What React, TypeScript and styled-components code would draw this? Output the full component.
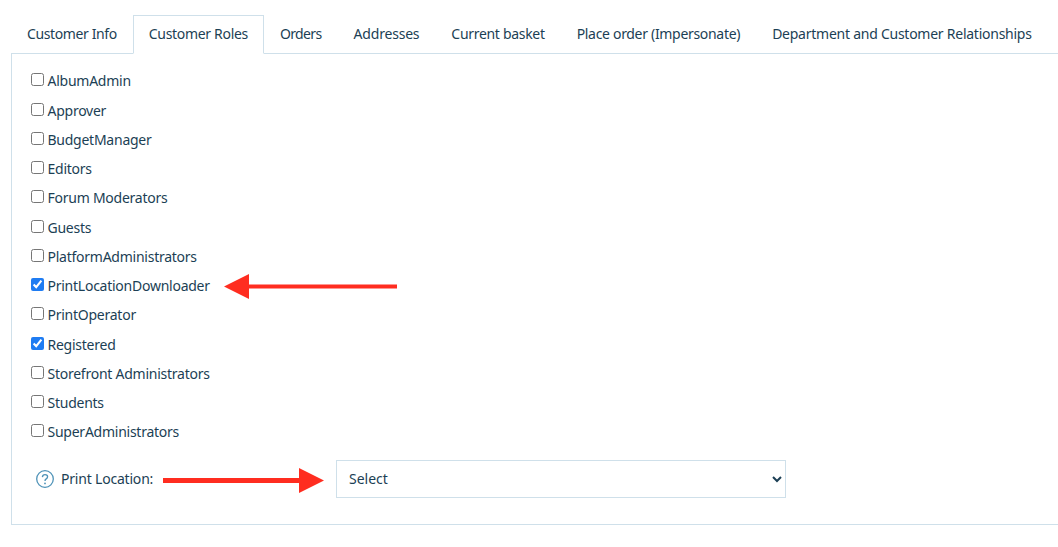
import React from 'react'
import styled, { createGlobalStyle } from 'styled-components'

const INK = '#1c3f55'
const LINE = '#cfe0ea'
const ROLES = [
  { name: 'AlbumAdmin', checked: false },
  { name: 'Approver', checked: false },
  { name: 'BudgetManager', checked: false },
  { name: 'Editors', checked: false },
  { name: 'Forum Moderators', checked: false },
  { name: 'Guests', checked: false },
  { name: 'PlatformAdministrators', checked: false },
  { name: 'PrintLocationDownloader', checked: true },
  { name: 'PrintOperator', checked: false },
  { name: 'Registered', checked: true },
  { name: 'Storefront Administrators', checked: false },
  { name: 'Students', checked: false },
  { name: 'SuperAdministrators', checked: false },
]
// tracking evens out the substitute font's widths per label
const TABS = [
  { label: 'Customer Info', tracking: -0.39 },
  { label: 'Customer Roles', tracking: -0.31 },
  { label: 'Orders', tracking: -0.64 },
  { label: 'Addresses', tracking: -0.2 },
  { label: 'Current basket', tracking: -0.31 },
  { label: 'Place order (Impersonate)', tracking: -0.31 },
  { label: 'Department and Customer Relationships', tracking: -0.25 },
]

const GlobalStyle = createGlobalStyle`
  html, body {
    margin: 0;
    background: #fff;
    overflow: hidden;
  }
  body {
    font-family: "Noto Sans", "Open Sans", sans-serif;
    font-size: 14px;
    color: ${INK};
  }
`

const PageStyled = styled.div`
  position: relative;
  width: 1058px;
  height: 547px;
  padding: 15px 0 0 11px;
  box-sizing: border-box;
`

const TabBarStyled = styled.div`
  display: flex;
  height: 39px;
  box-sizing: border-box;
  border-bottom: 1px solid ${LINE};
`

const TabStyled = styled.div<{ $active?: boolean; $tracking: number }>`
  height: 39px;
  box-sizing: border-box;
  padding: 0 15px;
  line-height: 36px;
  white-space: nowrap;
  letter-spacing: ${props => props.$tracking}px;
  border: 1px solid ${props => (props.$active ? LINE : 'transparent')};
  border-bottom: ${props => (props.$active ? '1px solid #fff' : '1px solid transparent')};
  background: ${props => (props.$active ? '#fff' : 'transparent')};
`

const PanelStyled = styled.div`
  height: 471px;
  box-sizing: border-box;
  padding: 12.25px 0 0 19px;
  border: 1px solid ${LINE};
  border-top: 0;
  border-right: 0;
  border-bottom: 1px solid ${LINE};
`

const RoleListStyled = styled.div`
  display: grid;
  grid-auto-rows: 29.25px;
`

const RoleStyled = styled.label`
  display: flex;
  align-items: center;
  letter-spacing: -0.25px;
`

const CheckboxStyled = styled.input`
  width: 13px;
  height: 13px;
  margin: -2px 3.5px 0 0;
  accent-color: #1f7cf2;
`

const FieldStyled = styled.div`
  display: flex;
  align-items: center;
  margin-top: 13.75px;
  padding-left: 5px;
`

const HelpIconStyled = styled.svg`
  width: 18px;
  height: 18px;
  flex: none;
  margin-right: 7px;
`

const LabelStyled = styled.div`
  width: 275px;
  margin-top: -2px;
  letter-spacing: -0.2px;
`

const SelectStyled = styled.select`
  width: 450px;
  height: 38px;
  box-sizing: border-box;
  padding: 0 8px 2px;
  border: 1px solid ${LINE};
  border-radius: 0;
  background: #fff;
  color: ${INK};
  font: inherit;
`

const ArrowStyled = styled.svg<{ $left: number; $top: number }>`
  position: absolute;
  left: ${props => props.$left}px;
  top: ${props => props.$top}px;
`

function App() {
  return (
    <PageStyled>
      <GlobalStyle />
      <TabBarStyled>
        {TABS.map(tab => (
          <TabStyled key={tab.label} $active={tab.label === 'Customer Roles'} $tracking={tab.tracking}>
            {tab.label}
          </TabStyled>
        ))}
      </TabBarStyled>
      <PanelStyled>
        <RoleListStyled>
          {ROLES.map(role => (
            <RoleStyled key={role.name}>
              <CheckboxStyled type="checkbox" defaultChecked={role.checked} />
              {role.name}
            </RoleStyled>
          ))}
        </RoleListStyled>
        <FieldStyled>
          <HelpIconStyled viewBox="0 0 18 18" fill="none">
            <circle cx="9" cy="9" r="8.3" stroke="#4f93b8" strokeWidth="1.3" />
            <path d="M6.4 7.1C6.5 5.5 7.6 4.6 9 4.6c1.5 0 2.6.9 2.6 2.2 0 1.1-.7 1.6-1.4 2.1-.8.5-1.2 1-1.2 2" stroke="#4f93b8" strokeWidth="1.3" />
            <circle cx="9" cy="13.4" r=".9" fill="#4f93b8" />
          </HelpIconStyled>
          <LabelStyled>Print Location:</LabelStyled>
          <SelectStyled defaultValue="Select">
            <option>Select</option>
          </SelectStyled>
        </FieldStyled>
      </PanelStyled>
      <ArrowStyled $left={224} $top={274} width="173" height="25" viewBox="0 0 173 25">
        <path d="M0 12.5 25 0V10.5H173V14.5H25V25Z" fill="#ff2d20" />
      </ArrowStyled>
      <ArrowStyled $left={163} $top={468} width="161" height="25" viewBox="0 0 161 25">
        <path d="M161 12.5 136 0V10H0V15H136V25Z" fill="#ff2d20" />
      </ArrowStyled>
    </PageStyled>
  )
}

export default App
